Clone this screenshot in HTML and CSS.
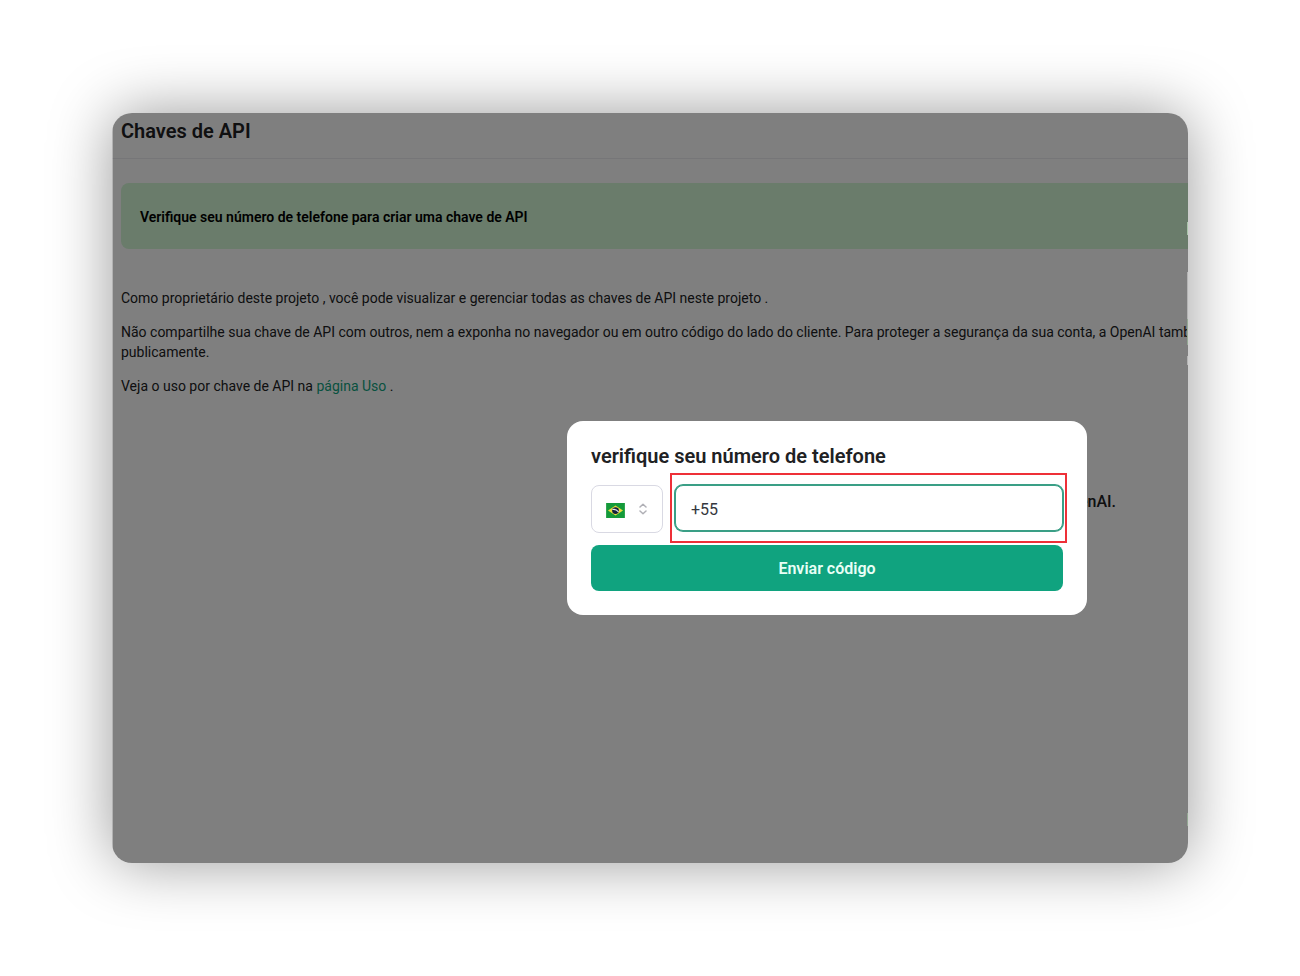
FILE: index.html
```
<!DOCTYPE html>
<html lang="pt-BR">
<head>
  <meta charset="utf-8">
  <meta name="viewport" content="width=device-width, initial-scale=1">
  <title>Chaves de API</title>
  <link rel="stylesheet" href="styles.css">
</head>
<body class="stage">
  <div class="window">
    <main class="page">
      <header class="page-header">
        <h1 class="page-title">Chaves de API</h1>
      </header>
      <div class="page-body">
        <section class="banner">
          <strong class="banner-text">Verifique seu número de telefone para criar uma chave de API</strong>
        </section>
        <div class="copy">
          <p>Como proprietário deste projeto , você pode visualizar e gerenciar todas as chaves de API neste projeto .</p>
          <p>Não compartilhe sua chave de API com outros, nem a exponha no navegador ou em outro código do lado do cliente. Para proteger a segurança da sua conta, a OpenAI também<br>publicamente.</p>
          <p>Veja o uso por chave de API na <a class="link" href="#uso">página Uso</a> .</p>
        </div>
        <p class="empty-note">OpenAI.</p>
      </div>
    </main>
    <div class="scrim"></div>
    <form class="dialog" role="dialog" aria-labelledby="dialog-title">
      <h2 class="dialog-title" id="dialog-title">verifique seu número de telefone</h2>
      <div class="phone-row">
        <div class="country">
          <select class="country-select" aria-label="País">
            <option value="BR"></option>
          </select>
          <div class="country-face">
            <svg class="flag" viewBox="0 0 20 16" aria-hidden="true">
              <rect width="20" height="16" fill="#149a3a"/>
              <path d="M10 2.600 18 8l-8 5.400L2 8z" fill="#e9dc3c"/>
              <circle cx="10" cy="8" r="3.600" fill="#14203c"/>
              <path d="M6.700 7c2.600-.5 5 .6 6.500 2.400" fill="none" stroke="#e8eef4" stroke-width="1.200"/>
            </svg>
            <svg class="chevrons" viewBox="0 0 10 14" aria-hidden="true">
              <path d="M2 5 5 2.200 8 5M2 9l3 2.800L8 9" fill="none" stroke="#b0b0b6" stroke-width="1.500" stroke-linecap="round" stroke-linejoin="round"/>
            </svg>
          </div>
        </div>
        <div class="phone">
          <input class="phone-input" type="tel" value="+55" aria-label="Número de telefone">
          <div class="highlight"></div>
        </div>
      </div>
      <button class="submit" type="button">Enviar código</button>
    </form>
  </div>
</body>
</html>
```

FILE: styles.css
```
* {
  box-sizing: border-box;
}

.stage {
  display: flex;
  min-height: 100vh;
  margin: 0;
  padding: 113px 112px;
  background: #fff;
  color: #202123;
  font-family: Roboto, "Liberation Sans", sans-serif;
}

.window {
  position: relative;
  flex: 1;
  min-width: 0;
  overflow: hidden;
  border-radius: 20px;
  background: #fff;
  box-shadow: 0 0 62px rgba(0, 0, 0, 0.4);
}

.page-header {
  padding: 6px 9px 15px;
  border-bottom: 1px solid #ececf1;
}

.page-title,
.dialog-title {
  margin: 0;
  font-size: 20px;
  font-weight: 600;
  line-height: 24px;
}

.page-body {
  padding: 24px 0 0 9px;
}

.banner {
  padding: 24px 19px 22px;
  border-radius: 8px 0 0 8px;
  background: #d4f8d6;
}

.banner-text {
  display: block;
  color: #000;
  font-size: 14px;
  font-weight: 600;
  line-height: 20px;
}

.copy {
  padding-top: 39px;
  font-size: 14px;
  font-weight: 400;
  line-height: 20px;
  white-space: nowrap;
}

.copy p {
  margin: 0 0 14px;
}

.link {
  color: #10a37f;
  text-decoration: none;
}

.empty-note {
  margin: 0;
  padding: 80px 72px 0 0;
  font-size: 16px;
  font-weight: 500;
  line-height: 24px;
  text-align: right;
}

.scrim {
  position: absolute;
  inset: 0;
  border-left: 1px solid rgba(255, 255, 255, 0.4);
  background:
    linear-gradient(
      transparent 109px, #a9c4aa 109px 122px,
      transparent 122px 159px, #b4b4b4 159px 206px,
      #94a894 206px 232px, transparent 232px 243px,
      #b4b4b4 243px 252px, transparent 252px 700px,
      #94a894 700px 713px, transparent 713px
    ) right / 1px 100% no-repeat,
    rgba(0, 0, 0, 0.5);
}

.dialog {
  position: absolute;
  top: 308px;
  left: 455px;
  display: flex;
  flex-direction: column;
  width: 520px;
  padding: 23px 24px 24px;
  border-radius: 16px;
  background: #fff;
}

.dialog-title {
  margin-bottom: 17px;
}

.phone-row {
  display: flex;
  align-items: flex-start;
  gap: 12px;
  margin-bottom: 12px;
}

.country {
  display: grid;
  width: 72px;
  height: 48px;
}

.country-select,
.country-face {
  grid-area: 1 / 1;
}

.country-select {
  width: 100%;
  border: 1px solid #d9d9e3;
  border-radius: 8px;
  background: #fff;
  appearance: none;
}

.country-face {
  display: flex;
  align-items: center;
  justify-content: space-between;
  padding: 0 15px;
  pointer-events: none;
}

.flag {
  width: 19px;
  height: 15px;
  margin-top: 2px;
}

.chevrons {
  width: 10px;
  height: 14px;
}

.phone {
  position: relative;
  flex: 1;
}

.phone-input {
  display: block;
  width: 100%;
  height: 46px;
  padding: 2px 15px 0;
  border: 1px solid #3a9f86;
  border-radius: 8px;
  outline: none;
  background: #fff;
  box-shadow: 0 0 0 1px #3a9f86;
  color: #353740;
  font-family: inherit;
  font-size: 16px;
  font-weight: 400;
}

.highlight {
  position: absolute;
  inset: -12px -4px -12px -5px;
  border: 2px solid #ee3038;
  pointer-events: none;
}

.submit {
  height: 46px;
  border: 0;
  border-radius: 8px;
  background: #10a37f;
  color: #e8fff6;
  font-family: inherit;
  font-size: 16px;
  font-weight: 600;
}
```
